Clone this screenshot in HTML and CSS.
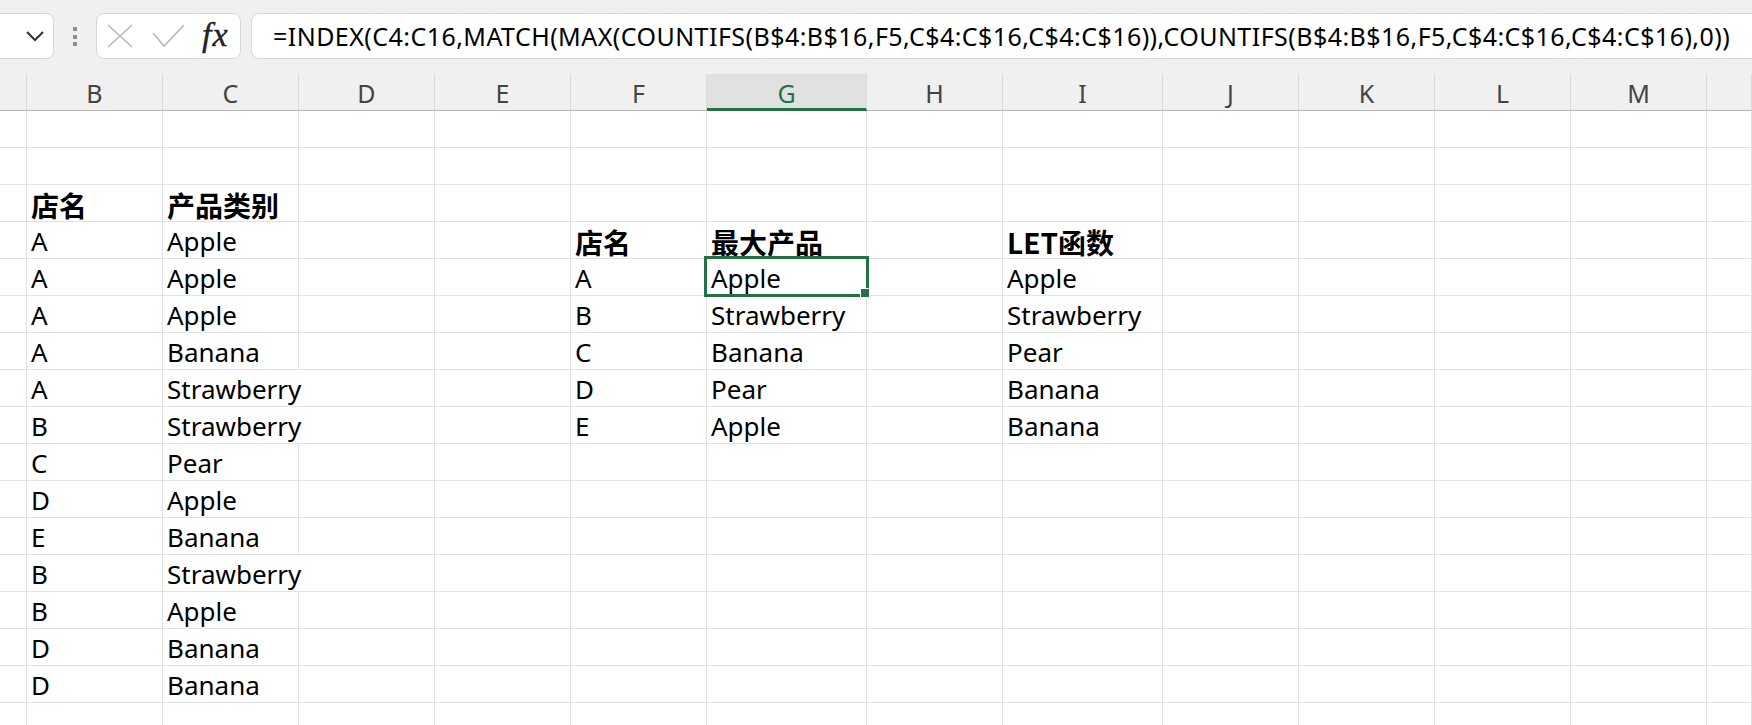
FILE: index.html
```html
<!DOCTYPE html>
<html lang="zh-CN">
<head>
    <meta charset="UTF-8">
    <title>Book1 - Excel</title>
    <link rel="stylesheet" href="styles.css">
</head>
<body>
    <div class="toolbar">
        <div class="namebox">
            <svg class="chevron" width="20" height="12" viewBox="0 0 20 12"><path d="M2 2 L10 10 L18 2" fill="none" stroke="#333" stroke-width="2"/></svg>
        </div>
        <div class="grip"><span></span><span></span><span></span></div>
        <div class="fxbox">
            <svg class="icon-x" width="26" height="24" viewBox="0 0 26 24"><path d="M1 1 L25 23 M25 1 L1 23" fill="none" stroke="#b8b8b8" stroke-width="1.6"/></svg>
            <svg class="icon-ok" width="33" height="24" viewBox="0 0 33 24"><path d="M1 9 L12 22 L32 1" fill="none" stroke="#b8b8b8" stroke-width="1.6"/></svg>
            <span class="fx">fx</span>
        </div>
        <div class="formula">=INDEX(C4:C16,MATCH(MAX(COUNTIFS(B$4:B$16,F5,C$4:C$16,C$4:C$16)),COUNTIFS(B$4:B$16,F5,C$4:C$16,C$4:C$16),0))</div>
    </div>

    <div class="sheet">
        <div class="row heads"><span></span><span>B</span><span>C</span><span>D</span><span>E</span><span>F</span><span class="sel">G</span><span>H</span><span>I</span><span>J</span><span>K</span><span>L</span><span>M</span><span></span></div>

        <div class="row"><span></span><span></span><span></span><span></span><span></span><span></span><span></span><span></span><span></span><span></span><span></span><span></span><span></span><span></span></div>
        <div class="row"><span></span><span></span><span></span><span></span><span></span><span></span><span></span><span></span><span></span><span></span><span></span><span></span><span></span><span></span></div>
        <div class="row"><span></span><span class="hd">店名</span><span class="hd">产品类别</span><span></span><span></span><span></span><span></span><span></span><span></span><span></span><span></span><span></span><span></span><span></span></div>
        <div class="row"><span></span><span>A</span><span>Apple</span><span></span><span></span><span class="hd">店名</span><span class="hd">最大产品</span><span></span><span class="hd">LET函数</span><span></span><span></span><span></span><span></span><span></span></div>
        <div class="row"><span></span><span>A</span><span>Apple</span><span></span><span></span><span>A</span><span>Apple</span><span></span><span>Apple</span><span></span><span></span><span></span><span></span><span></span></div>
        <div class="row"><span></span><span>A</span><span>Apple</span><span></span><span></span><span>B</span><span>Strawberry</span><span></span><span>Strawberry</span><span></span><span></span><span></span><span></span><span></span></div>
        <div class="row"><span></span><span>A</span><span>Banana</span><span></span><span></span><span>C</span><span>Banana</span><span></span><span>Pear</span><span></span><span></span><span></span><span></span><span></span></div>
        <div class="row"><span></span><span>A</span><span class="spill">Strawberry</span><span></span><span></span><span>D</span><span>Pear</span><span></span><span>Banana</span><span></span><span></span><span></span><span></span><span></span></div>
        <div class="row"><span></span><span>B</span><span class="spill">Strawberry</span><span></span><span></span><span>E</span><span>Apple</span><span></span><span>Banana</span><span></span><span></span><span></span><span></span><span></span></div>
        <div class="row"><span></span><span>C</span><span>Pear</span><span></span><span></span><span></span><span></span><span></span><span></span><span></span><span></span><span></span><span></span><span></span></div>
        <div class="row"><span></span><span>D</span><span>Apple</span><span></span><span></span><span></span><span></span><span></span><span></span><span></span><span></span><span></span><span></span><span></span></div>
        <div class="row"><span></span><span>E</span><span>Banana</span><span></span><span></span><span></span><span></span><span></span><span></span><span></span><span></span><span></span><span></span><span></span></div>
        <div class="row"><span></span><span>B</span><span class="spill">Strawberry</span><span></span><span></span><span></span><span></span><span></span><span></span><span></span><span></span><span></span><span></span><span></span></div>
        <div class="row"><span></span><span>B</span><span>Apple</span><span></span><span></span><span></span><span></span><span></span><span></span><span></span><span></span><span></span><span></span><span></span></div>
        <div class="row"><span></span><span>D</span><span>Banana</span><span></span><span></span><span></span><span></span><span></span><span></span><span></span><span></span><span></span><span></span><span></span></div>
        <div class="row"><span></span><span>D</span><span>Banana</span><span></span><span></span><span></span><span></span><span></span><span></span><span></span><span></span><span></span><span></span><span></span></div>
        <div class="row"><span></span><span></span><span></span><span></span><span></span><span></span><span></span><span></span><span></span><span></span><span></span><span></span><span></span><span></span></div>

        <div class="selection"><div class="handle"></div></div>
    </div>
</body>
</html>
```

FILE: styles.css
```css
body {
    margin: 0;
    background-color: #fff;
    font-family: "Noto Sans", "Noto Sans CJK SC", sans-serif;
    color: #000;
    overflow: hidden;
}
.toolbar {
    height: 74px;
    box-sizing: border-box;
    padding-top: 13px;
    background-color: #f0f0f0;
    display: flex;
    align-items: flex-start;
}
.namebox {
    width: 66px;
    height: 46px;
    margin-left: -12px;
    box-sizing: border-box;
    background-color: #fff;
    border: 1px solid #d6d6d6;
    border-radius: 8px;
    display: flex;
    align-items: center;
    justify-content: flex-end;
    padding-right: 8px;
}
.grip {
    margin-left: 19px;
    padding-top: 14px;
    display: flex;
    flex-direction: column;
    gap: 3.5px;
}
.grip span {
    width: 4px;
    height: 4px;
    background-color: #8f8f8f;
}
.fxbox {
    width: 145px;
    height: 46px;
    margin-left: 19px;
    box-sizing: border-box;
    background-color: #fff;
    border: 1px solid #d6d6d6;
    border-radius: 8px;
    display: flex;
    align-items: center;
    padding-left: 10px;
}
.icon-ok {
    margin-left: 19px;
}
.fx {
    margin-left: 17px;
    font-family: "Liberation Serif", serif;
    font-style: italic;
    font-size: 34px;
    letter-spacing: 1px;
    color: #222;
    line-height: 1;
    margin-top: -2px;
    -webkit-text-stroke: 0.4px #222;
}
.formula {
    flex: 1;
    height: 46px;
    margin-left: 10px;
    margin-right: -20px;
    box-sizing: border-box;
    background-color: #fff;
    border: 1px solid #d6d6d6;
    border-radius: 8px;
    padding-left: 21px;
    display: flex;
    align-items: center;
    font-size: 25px;
    letter-spacing: 0.45px;
    white-space: nowrap;
    overflow: hidden;
}
.sheet {
    position: relative;
}
.row {
    display: grid;
    grid-template-columns: 27px repeat(5, 136px) 160px 136px 160px repeat(4, 136px) 1fr;
    height: 37px;
}
.row > span {
    box-sizing: border-box;
    border-right: 1px solid #e1e1e1;
    border-bottom: 1px solid #e1e1e1;
    display: flex;
    align-items: flex-end;
    padding: 0 0 4px 4px;
    font-size: 26px;
    line-height: 1;
    white-space: nowrap;
    overflow: hidden;
}
.row > span.spill {
    overflow: visible;
    border-right-color: transparent;
}
.row > span.hd {
    font-family: "Noto Sans CJK SC", sans-serif;
    font-weight: 700;
    font-size: 28px;
    padding-bottom: 2px;
    overflow: visible;
}
.heads > span {
    background-color: #f0f0f0;
    border-right-color: #dadada;
    border-bottom-color: #b4b4b4;
    justify-content: center;
    align-items: center;
    padding: 2px 0 0 0;
    font-size: 25px;
    color: #444;
}
.heads > span.sel {
    background-color: #e1e1e1;
    color: #217346;
    border-bottom: 3px solid #217346;
    padding-top: 4px;
}
.selection {
    position: absolute;
    left: 704px;
    top: 182px;
    width: 165px;
    height: 41px;
    box-sizing: border-box;
    border: 3px solid #217346;
}
.handle {
    position: absolute;
    right: -4px;
    bottom: -4px;
    width: 8px;
    height: 8px;
    background-color: #217346;
    border: 1px solid #fff;
}
```
